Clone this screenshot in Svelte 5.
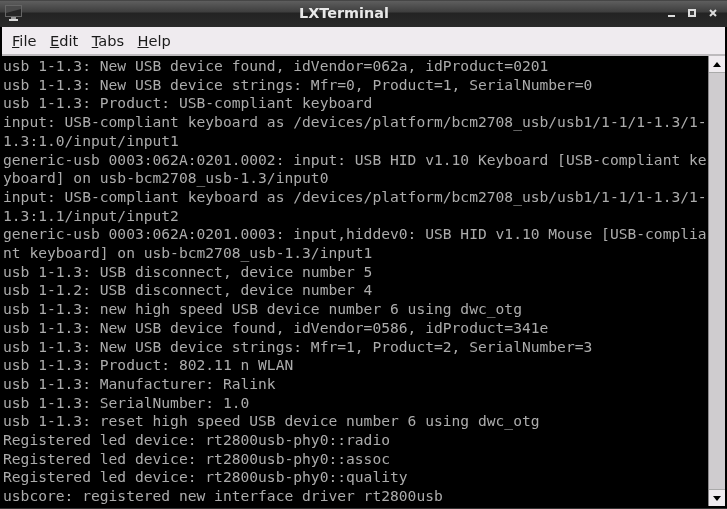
<script>
	const menus = [
		{ key: 'F', rest: 'ile' },
		{ key: 'E', rest: 'dit' },
		{ key: 'T', rest: 'abs' },
		{ key: 'H', rest: 'elp' }
	];

	const lines = [
		'usb 1-1.3: New USB device found, idVendor=062a, idProduct=0201',
		'usb 1-1.3: New USB device strings: Mfr=0, Product=1, SerialNumber=0',
		'usb 1-1.3: Product: USB-compliant keyboard',
		'input: USB-compliant keyboard as /devices/platform/bcm2708_usb/usb1/1-1/1-1.3/1-',
		'1.3:1.0/input/input1',
		'generic-usb 0003:062A:0201.0002: input: USB HID v1.10 Keyboard [USB-compliant ke',
		'yboard] on usb-bcm2708_usb-1.3/input0',
		'input: USB-compliant keyboard as /devices/platform/bcm2708_usb/usb1/1-1/1-1.3/1-',
		'1.3:1.1/input/input2',
		'generic-usb 0003:062A:0201.0003: input,hiddev0: USB HID v1.10 Mouse [USB-complia',
		'nt keyboard] on usb-bcm2708_usb-1.3/input1',
		'usb 1-1.3: USB disconnect, device number 5',
		'usb 1-1.2: USB disconnect, device number 4',
		'usb 1-1.3: new high speed USB device number 6 using dwc_otg',
		'usb 1-1.3: New USB device found, idVendor=0586, idProduct=341e',
		'usb 1-1.3: New USB device strings: Mfr=1, Product=2, SerialNumber=3',
		'usb 1-1.3: Product: 802.11 n WLAN',
		'usb 1-1.3: Manufacturer: Ralink',
		'usb 1-1.3: SerialNumber: 1.0',
		'usb 1-1.3: reset high speed USB device number 6 using dwc_otg',
		'Registered led device: rt2800usb-phy0::radio',
		'Registered led device: rt2800usb-phy0::assoc',
		'Registered led device: rt2800usb-phy0::quality',
		'usbcore: registered new interface driver rt2800usb'
	];
</script>

<div class="window">
	<header class="titlebar">
		<svg class="app-icon" width="18" height="17" viewBox="0 0 18 17">
			<rect x="0.5" y="0.5" width="16" height="11" fill="#262626" stroke="#666" />
			<path d="M1 1h15v3L1 8z" fill="#4a4a4a" />
			<rect x="6" y="12" width="5" height="2" fill="#999" />
			<rect x="4" y="14" width="9" height="2" fill="#d8d8d8" />
		</svg>
		<span class="title">LXTerminal</span>
		<div class="controls">
			<span class="minimize"></span>
			<span class="maximize"></span>
			<svg width="8" height="8" viewBox="0 0 8 8">
				<path d="M1 1l6 6M7 1l-6 6" stroke="#dcdcdc" stroke-width="2" />
			</svg>
		</div>
	</header>

	<nav class="menubar">
		{#each menus as menu}
			<span class="menu-item"><u>{menu.key}</u>{menu.rest}</span>
		{/each}
	</nav>

	<main class="terminal">
		<pre class="output">{#each lines as line}<div class="line">{line}</div>{/each}</pre>
		<div class="scrollbar">
			<div class="arrow top"><span class="tri up"></span></div>
			<div class="trough"></div>
			<div class="arrow bottom"><span class="tri down"></span></div>
		</div>
	</main>
</div>

<style>
	:global(body) {
		background: #000;
	}

	.window {
		width: 727px;
		height: 509px;
		display: flex;
		flex-direction: column;
		overflow: hidden;
		box-sizing: border-box;
		background: #000;
	}

	.titlebar {
		height: 27px;
		flex: none;
		position: relative;
		display: flex;
		align-items: center;
		justify-content: space-between;
		padding: 0 10px 0 5px;
		box-sizing: border-box;
		background: linear-gradient(#2e2e2e 0, #5e5e5e 1px, #3e3e3e 12px, #232323 13px, #2a2a2a 100%);
	}

	.title {
		position: absolute;
		left: -39px;
		right: 0;
		top: 5px;
		text-align: center;
		color: #e8e8e8;
		font: bold 14.4px 'DejaVu Sans', sans-serif;
		filter: blur(0.3px);
	}

	.controls {
		display: flex;
		align-items: center;
		gap: 13px;
		margin-top: -2px;
	}

	.minimize {
		width: 7px;
		height: 2px;
		margin-top: 6px;
		background: #dcdcdc;
	}

	.maximize {
		width: 4px;
		height: 4px;
		border: 2px solid #dcdcdc;
		background: #3a3a3a;
	}

	.menubar {
		height: 29px;
		flex: none;
		display: flex;
		align-items: center;
		gap: 13.5px;
		margin: 0 2px;
		padding: 0 10px;
		box-sizing: border-box;
		background: #efebef;
		border-bottom: 2px solid #bdbabd;
		color: #1a1a1a;
		font: 14.6px 'DejaVu Sans', sans-serif;
	}

	.menu-item {
		filter: blur(0.25px);
	}

	.terminal {
		flex: 1;
		min-height: 0;
		display: flex;
		padding: 0 2px 2px 3px;
		border-bottom: 1px solid #333;
	}

	.output {
		flex: 1;
		margin: 0;
		padding-top: 1px;
		overflow: hidden;
		color: #acacac;
		font: 14.62px/18.7px 'DejaVu Sans Mono', monospace;
		filter: blur(0.35px);
	}

	.scrollbar {
		width: 17px;
		flex: none;
		display: flex;
		flex-direction: column;
		background: #cfcccf;
		border-left: 1px solid #8a888a;
		box-sizing: border-box;
	}

	.arrow {
		height: 16px;
		flex: none;
		display: flex;
		align-items: center;
		justify-content: center;
		background: #efebef;
	}

	.arrow.top {
		border-bottom: 1px solid #aaa;
	}

	.arrow.bottom {
		border-top: 1px solid #aaa;
	}

	.trough {
		flex: 1;
	}

	.tri {
		width: 0;
		height: 0;
		border-left: 4px solid transparent;
		border-right: 4px solid transparent;
	}

	.tri.up {
		border-bottom: 5px solid #000;
	}

	.tri.down {
		border-top: 5px solid #000;
	}
</style>
